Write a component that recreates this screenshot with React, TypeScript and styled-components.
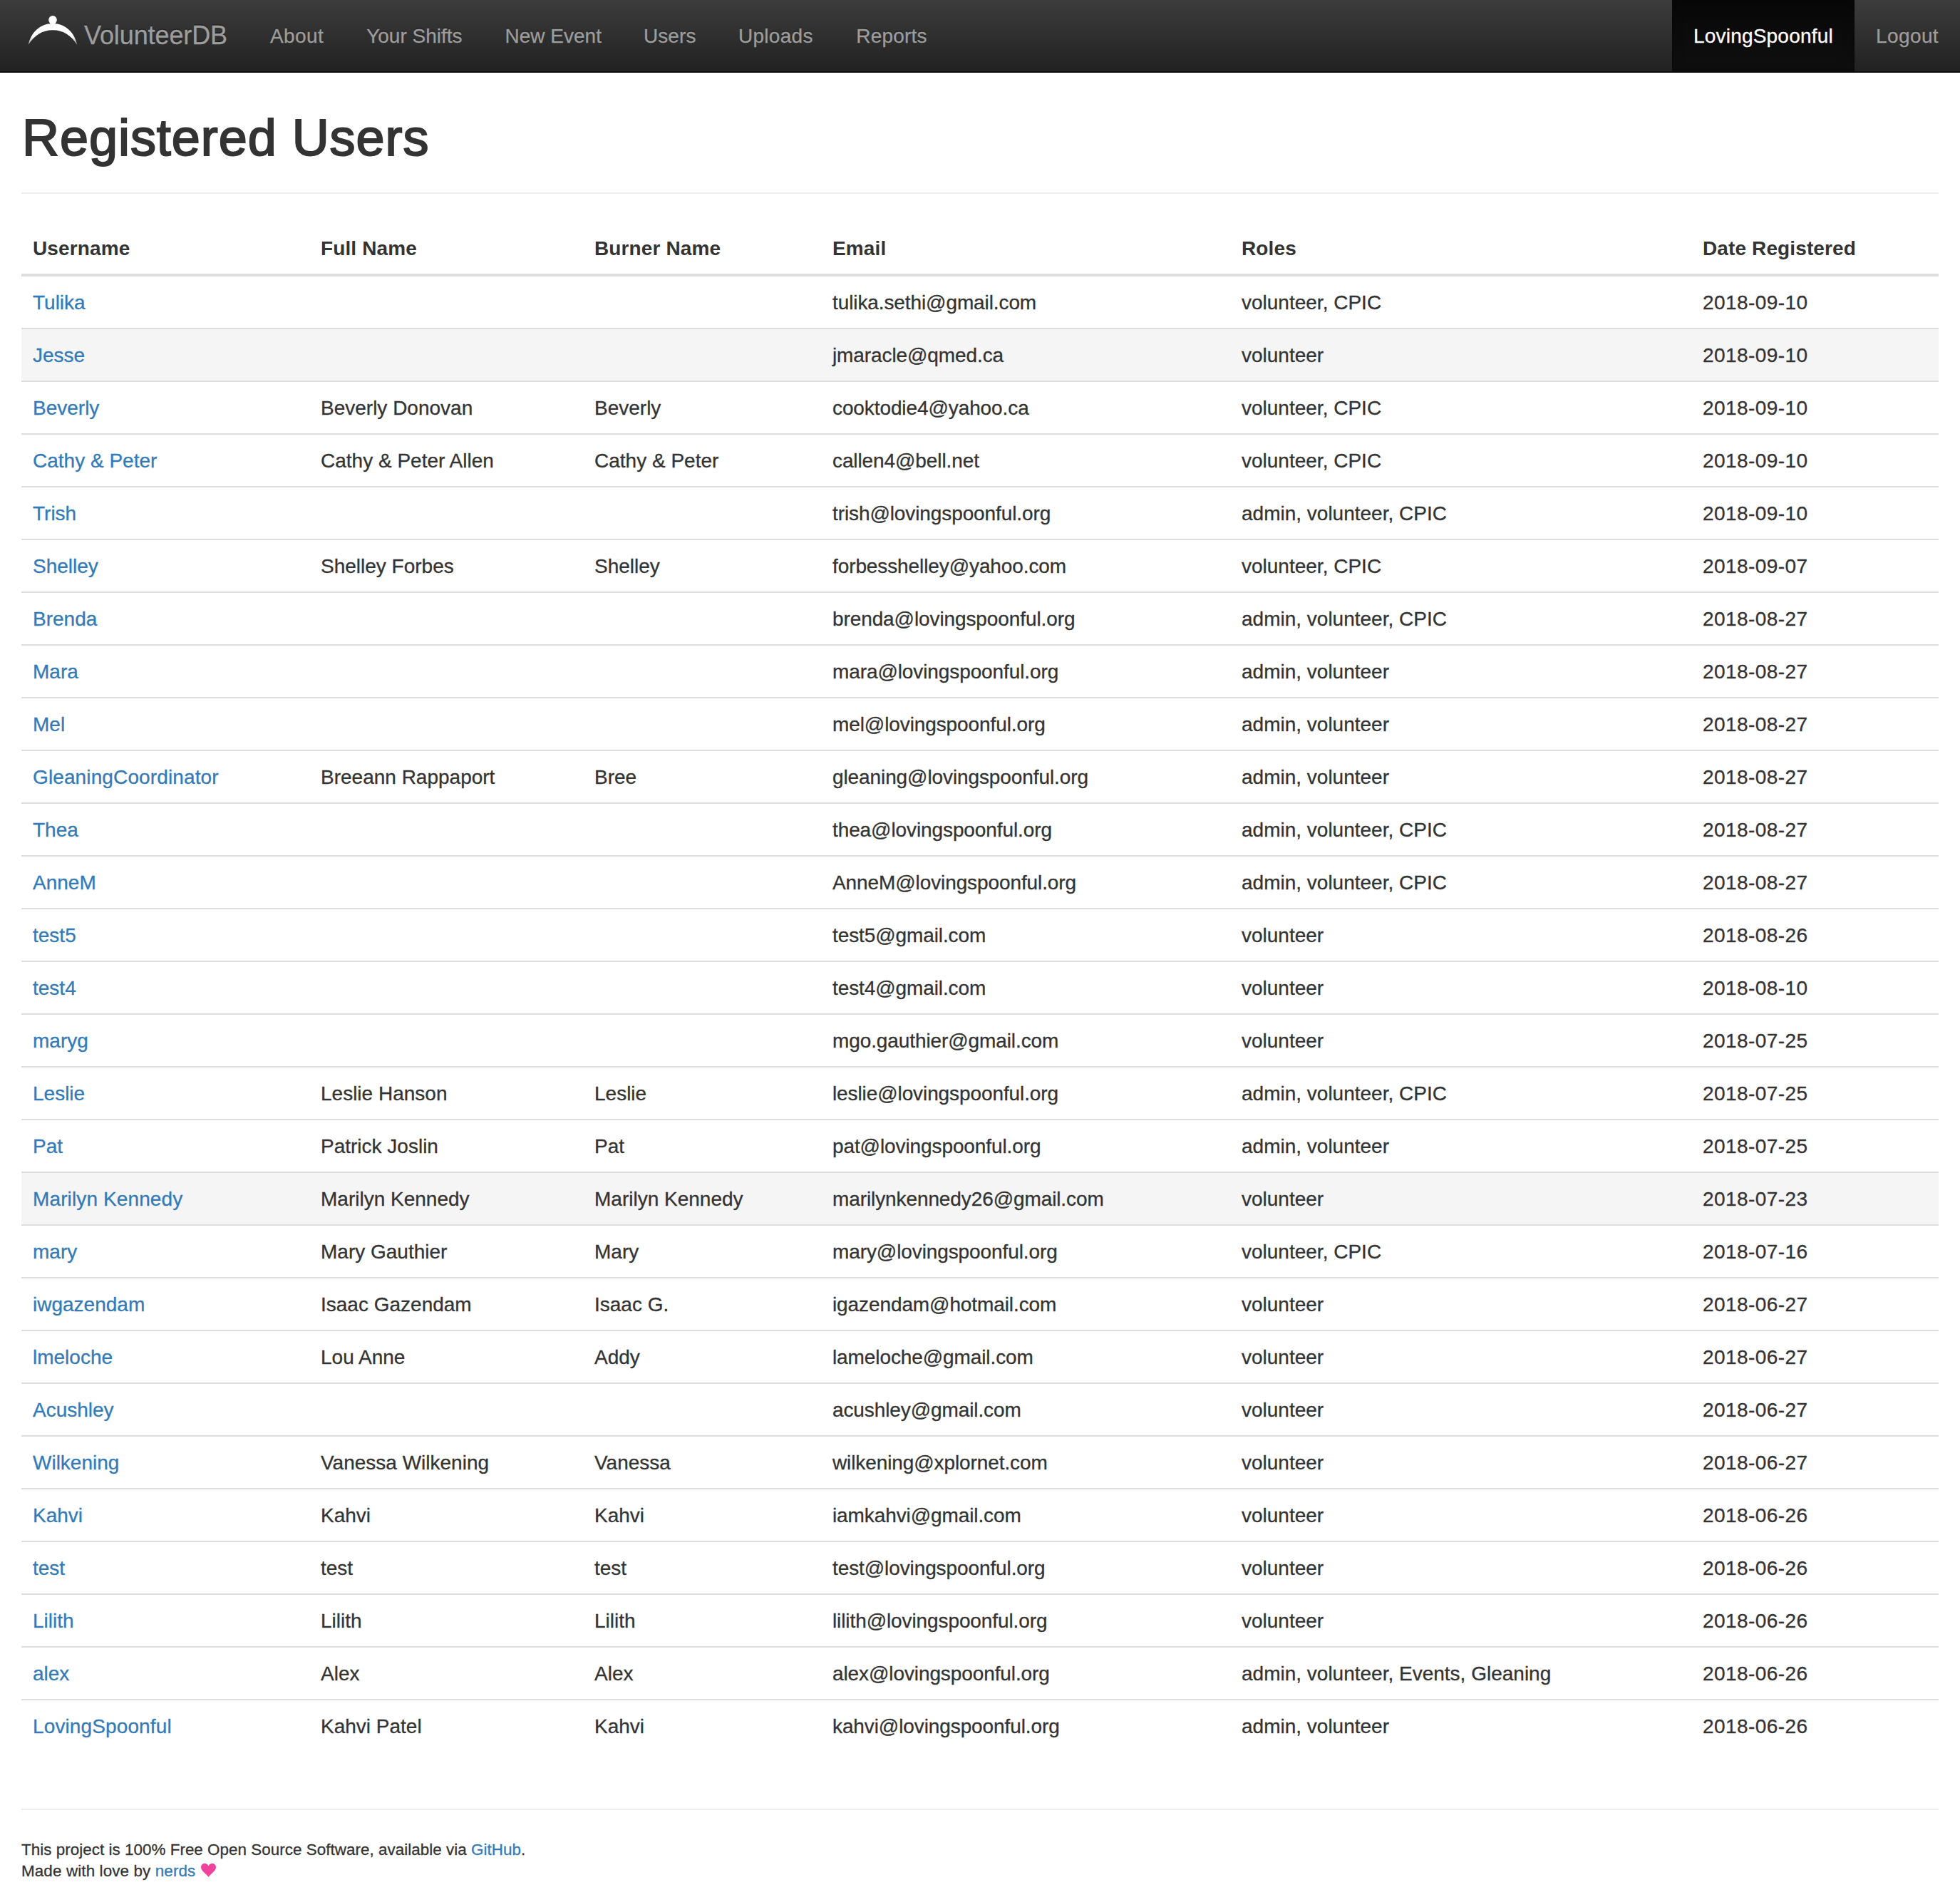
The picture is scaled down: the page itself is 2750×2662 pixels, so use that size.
import React from "react";
import styled, { createGlobalStyle } from "styled-components";

const GlobalStyle = createGlobalStyle`
  *, *::before, *::after { box-sizing: border-box; }
  html, body { margin: 0; padding: 0; background: #fff; }
  body {
    font-family: "Liberation Sans", Arial, sans-serif;
    font-size: 28px;
    line-height: 40px;
    color: #333;
    -webkit-text-stroke: 0.3px currentColor;
  }
`;

const Page = styled.div`
  width: 2750px;
  height: 2662px;
  overflow: hidden;
`;

const Navbar = styled.nav`
  display: flex;
  justify-content: space-between;
  height: 102px;
  border-bottom: 2px solid #080808;
  background: linear-gradient(to bottom, #3c3c3c 0%, #222 100%);
`;

const NavGroup = styled.div`
  display: flex;
`;

const Brand = styled.a`
  display: flex;
  width: 349px;
  padding: 0 0 0 38px;
  color: #9d9d9d;
  font-size: 36px;
  line-height: 100px;
  letter-spacing: -0.1px;
  white-space: nowrap;
  text-decoration: none;
  text-shadow: 0 -2px 0 rgba(0, 0, 0, 0.25);
`;

const BrandMark = styled.svg`
  flex: none;
  width: 72px;
  height: 48px;
  margin: 18px 8px 0 0;
`;

const NavLink = styled.a<{ $width: number; $active?: boolean; $tracking?: number }>`
  width: ${(p) => p.$width}px;
  height: 100px;
  padding: 31px 0 29px 30px;
  line-height: 40px;
  letter-spacing: ${(p) => p.$tracking ?? 0}px;
  white-space: nowrap;
  text-decoration: none;
  text-shadow: 0 -2px 0 rgba(0, 0, 0, 0.25);
  color: ${(p) => (p.$active ? "#fff" : "#9d9d9d")};
  background: ${(p) => (p.$active ? "linear-gradient(to bottom, #080808, #0f0f0f)" : "none")};
  box-shadow: ${(p) => (p.$active ? "inset 0 6px 18px rgba(0, 0, 0, 0.25)" : "none")};
`;

const Container = styled.main`
  padding: 0 30px;
`;

const PageHeader = styled.header`
  padding: 51px 0 37px 1px;
  margin-bottom: 40px;
  border-bottom: 2px solid #eee;
`;

const Title = styled.h1`
  margin: 0;
  font-size: 72px;
  font-weight: 400;
  line-height: 80px;
  letter-spacing: 0.95px;
  -webkit-text-stroke: 2px #333;
`;

const Table = styled.table`
  width: 2690px;
  table-layout: fixed;
  border-collapse: separate;
  border-spacing: 0;
`;

const HeadCell = styled.th`
  height: 76px;
  padding: 17px 16px 15px;
  border-bottom: 4px solid #ddd;
  text-align: left;
  font-weight: 700;
  letter-spacing: 0.12px;
  white-space: nowrap;
  -webkit-text-stroke: 0;
`;

const Row = styled.tr<{ $shaded?: boolean }>`
  background: ${(p) => (p.$shaded ? "#f5f5f5" : "transparent")};
  &:not(:first-child) > td {
    border-top: 2px solid #ddd;
  }
`;

const Cell = styled.td<{ $tracking?: number }>`
  padding: 17px 16px 15px;
  white-space: nowrap;
  letter-spacing: ${(p) => p.$tracking ?? 0}px;
`;

const Link = styled.a`
  color: #337ab7;
  text-decoration: none;
`;

const Footer = styled.footer`
  margin-top: 80px;
  padding-top: 41px;
  border-top: 2px solid #eee;
  font-size: 22.4px;
  line-height: 30px;
  letter-spacing: 0.04px;
`;

const FooterLine = styled.div<{ $tracking?: number }>`
  display: flex;
  white-space: pre;
  letter-spacing: ${(p) => p.$tracking ?? 0}px;
`;

const Heart = styled.svg`
  width: 21px;
  height: 19px;
  margin: 4px 0 0 8px;
`;

type NavEntry = { label: string; width: number; tracking?: number };

const NAV: NavEntry[] = [
  { label: "About", width: 135.2, tracking: 0.4 },
  { label: "Your Shifts", width: 194.4, tracking: 0 },
  { label: "New Event", width: 194.3, tracking: 0 },
  { label: "Users", width: 133, tracking: 0.1 },
  { label: "Uploads", width: 165.4, tracking: 0.3 },
  { label: "Reports", width: 160, tracking: 0.2 },
];

const COLUMNS = [
  { title: "Username", width: 404 },
  { title: "Full Name", width: 384 },
  { title: "Burner Name", width: 334 },
  { title: "Email", width: 574 },
  { title: "Roles", width: 647 },
  { title: "Date Registered", width: 347 },
];

type User = [string, string, string, string, string, string];

const USERS: User[] = [
  ["Tulika", "", "", "tulika.sethi@gmail.com", "volunteer, CPIC", "2018-09-10"],
  ["Jesse", "", "", "jmaracle@qmed.ca", "volunteer", "2018-09-10"],
  ["Beverly", "Beverly Donovan", "Beverly", "cooktodie4@yahoo.ca", "volunteer, CPIC", "2018-09-10"],
  ["Cathy & Peter", "Cathy & Peter Allen", "Cathy & Peter", "callen4@bell.net", "volunteer, CPIC", "2018-09-10"],
  ["Trish", "", "", "trish@lovingspoonful.org", "admin, volunteer, CPIC", "2018-09-10"],
  ["Shelley", "Shelley Forbes", "Shelley", "forbesshelley@yahoo.com", "volunteer, CPIC", "2018-09-07"],
  ["Brenda", "", "", "brenda@lovingspoonful.org", "admin, volunteer, CPIC", "2018-08-27"],
  ["Mara", "", "", "mara@lovingspoonful.org", "admin, volunteer", "2018-08-27"],
  ["Mel", "", "", "mel@lovingspoonful.org", "admin, volunteer", "2018-08-27"],
  ["GleaningCoordinator", "Breeann Rappaport", "Bree", "gleaning@lovingspoonful.org", "admin, volunteer", "2018-08-27"],
  ["Thea", "", "", "thea@lovingspoonful.org", "admin, volunteer, CPIC", "2018-08-27"],
  ["AnneM", "", "", "AnneM@lovingspoonful.org", "admin, volunteer, CPIC", "2018-08-27"],
  ["test5", "", "", "test5@gmail.com", "volunteer", "2018-08-26"],
  ["test4", "", "", "test4@gmail.com", "volunteer", "2018-08-10"],
  ["maryg", "", "", "mgo.gauthier@gmail.com", "volunteer", "2018-07-25"],
  ["Leslie", "Leslie Hanson", "Leslie", "leslie@lovingspoonful.org", "admin, volunteer, CPIC", "2018-07-25"],
  ["Pat", "Patrick Joslin", "Pat", "pat@lovingspoonful.org", "admin, volunteer", "2018-07-25"],
  ["Marilyn Kennedy", "Marilyn Kennedy", "Marilyn Kennedy", "marilynkennedy26@gmail.com", "volunteer", "2018-07-23"],
  ["mary", "Mary Gauthier", "Mary", "mary@lovingspoonful.org", "volunteer, CPIC", "2018-07-16"],
  ["iwgazendam", "Isaac Gazendam", "Isaac G.", "igazendam@hotmail.com", "volunteer", "2018-06-27"],
  ["lmeloche", "Lou Anne", "Addy", "lameloche@gmail.com", "volunteer", "2018-06-27"],
  ["Acushley", "", "", "acushley@gmail.com", "volunteer", "2018-06-27"],
  ["Wilkening", "Vanessa Wilkening", "Vanessa", "wilkening@xplornet.com", "volunteer", "2018-06-27"],
  ["Kahvi", "Kahvi", "Kahvi", "iamkahvi@gmail.com", "volunteer", "2018-06-26"],
  ["test", "test", "test", "test@lovingspoonful.org", "volunteer", "2018-06-26"],
  ["Lilith", "Lilith", "Lilith", "lilith@lovingspoonful.org", "volunteer", "2018-06-26"],
  ["alex", "Alex", "Alex", "alex@lovingspoonful.org", "admin, volunteer, Events, Gleaning", "2018-06-26"],
  ["LovingSpoonful", "Kahvi Patel", "Kahvi", "kahvi@lovingspoonful.org", "admin, volunteer", "2018-06-26"],
];

const SHADED = new Set(["Jesse", "Marilyn Kennedy"]);

export default function App() {
  return (
    <Page>
      <GlobalStyle />
      <Navbar>
        <NavGroup>
          <Brand>
            <BrandMark viewBox="38 18 72 48">
              <defs>
                <linearGradient id="arc" x1="0" y1="0" x2="0" y2="1">
                  <stop offset="0.6" stopColor="#fff" />
                  <stop offset="1" stopColor="#fff" stopOpacity="0.5" />
                </linearGradient>
              </defs>
              <ellipse cx="74" cy="28" rx="5.8" ry="6" fill="#fff" />
              <path
                d="M39.8 63 C43 46 56 33 74 33 C92 33 105 46 108.2 63 C100 50 89 42.3 74 42.3 C59 42.3 48 50 39.8 63 Z"
                fill="url(#arc)"
              />
            </BrandMark>
            VolunteerDB
          </Brand>
          {NAV.map((n) => (
            <NavLink key={n.label} $width={n.width} $tracking={n.tracking}>
              {n.label}
            </NavLink>
          ))}
        </NavGroup>
        <NavGroup>
          <NavLink $width={256} $tracking={0.2} $active>
            LovingSpoonful
          </NavLink>
          <NavLink $width={148} $tracking={0.4}>
            Logout
          </NavLink>
        </NavGroup>
      </Navbar>
      <Container>
        <PageHeader>
          <Title>Registered Users</Title>
        </PageHeader>
        <Table>
          <colgroup>
            {COLUMNS.map((c) => (
              <col key={c.title} width={c.width} />
            ))}
          </colgroup>
          <thead>
            <tr>
              {COLUMNS.map((c) => (
                <HeadCell key={c.title}>{c.title}</HeadCell>
              ))}
            </tr>
          </thead>
          <tbody>
            {USERS.map(([username, fullName, burnerName, email, roles, date]) => (
              <Row key={username} $shaded={SHADED.has(username)}>
                <Cell $tracking={username.length > 13 ? 0.12 : 0}>
                  <Link>{username}</Link>
                </Cell>
                <Cell>{fullName}</Cell>
                <Cell>{burnerName}</Cell>
                <Cell $tracking={-0.1}>{email}</Cell>
                <Cell>{roles}</Cell>
                <Cell $tracking={0.42}>{date}</Cell>
              </Row>
            ))}
          </tbody>
        </Table>
        <Footer>
          <FooterLine $tracking={0.04}>
            This project is 100% Free Open Source Software, available via <Link>GitHub</Link>.
          </FooterLine>
          <FooterLine $tracking={0.13}>
            Made with love by <Link>nerds</Link>
            <Heart viewBox="0 0 20 19" preserveAspectRatio="none">
              <path
                d="M10 19 C7 14 0 10.5 0 5.2 C0 2 2.2 0 5 0 C7.4 0 9.3 1.4 10 3.6 C10.7 1.4 12.6 0 15 0 C17.8 0 20 2 20 5.2 C20 10.5 13 14 10 19 Z"
                fill="#f0439b"
              />
            </Heart>
          </FooterLine>
        </Footer>
      </Container>
    </Page>
  );
}
